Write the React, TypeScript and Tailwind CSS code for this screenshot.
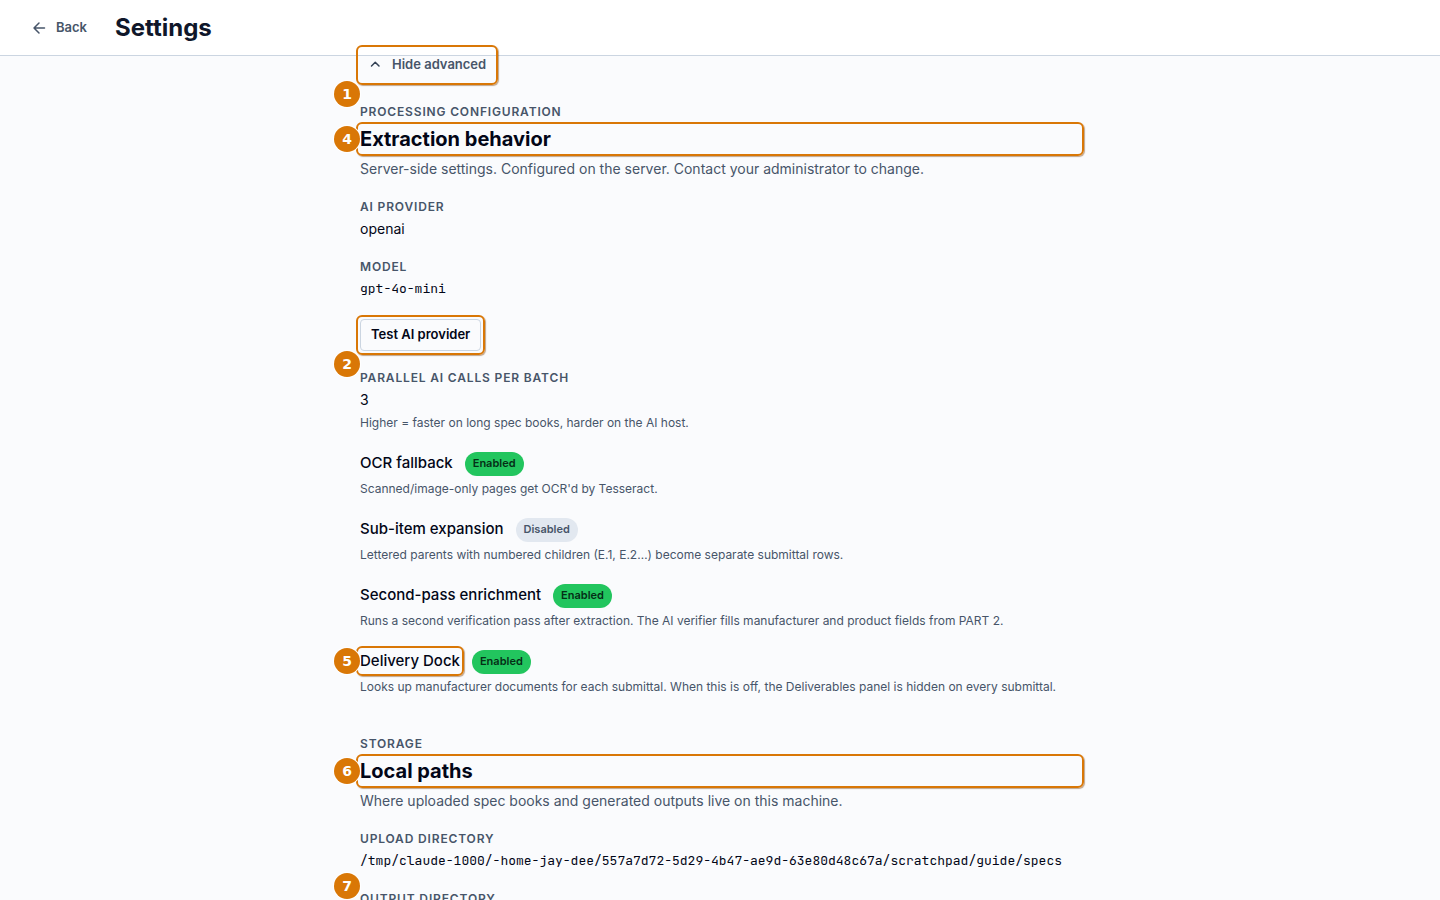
import type { ReactNode } from "react";

function Marker({ n, place }: { n: number; place: string }) {
  return (
    <span
      className={`absolute z-30 flex h-[26px] w-[26px] items-center justify-center rounded-full bg-[#d97706] font-['DejaVu_Sans',sans-serif] text-[14px] font-bold leading-none text-white shadow-[0_0_0_1px_#ffffff] ${place}`}
    >
      {n}
    </span>
  );
}

function Frame() {
  return (
    <span
      aria-hidden="true"
      className="pointer-events-none absolute -inset-1 z-20 rounded-md border-2 border-[#d97706] shadow-[1px_1px_1px_rgba(120,60,0,0.45)]"
    />
  );
}

function BackArrow() {
  return (
    <svg width="16" height="16" viewBox="0 0 16 16" fill="none" stroke="currentColor" strokeWidth="1.5" strokeLinecap="round" strokeLinejoin="round" aria-hidden="true">
      <path d="M12.5 8H2M7 3L2 8l5 5" />
    </svg>
  );
}

function Chevron() {
  return (
    <svg width="16" height="16" viewBox="0 0 16 16" fill="none" stroke="#334155" strokeWidth="1.5" strokeLinecap="round" strokeLinejoin="round" aria-hidden="true">
      <path d="M3.5 9L7.25 5.25L11 9" />
    </svg>
  );
}

function Eyebrow({ children }: { children: ReactNode }) {
  return (
    <p className="text-[12px] font-semibold uppercase leading-4 tracking-[0.07em] text-[#475569]">{children}</p>
  );
}

function SectionHead({ eyebrow, title, text, n }: { eyebrow: string; title: string; text: string; n: number }) {
  return (
    <header>
      <Eyebrow>{eyebrow}</Eyebrow>
      <div className="relative mt-[6px]">
        <Frame />
        <Marker n={n} place="-left-[26px] top-0" />
        <h2 className="text-[20px] font-bold leading-[26px] text-[#020617]">{title}</h2>
      </div>
      <p className="mt-[6px] text-[14px] leading-[22px] text-[#475569]">{text}</p>
    </header>
  );
}

function Field({ label, value, mono, help }: { label: string; value: string; mono?: boolean; help?: string }) {
  return (
    <dl>
      <dt className="text-[12px] font-semibold uppercase leading-4 tracking-[0.07em] text-[#475569]">{label}</dt>
      <dd
        className={
          mono
            ? "mt-[3px] whitespace-nowrap font-['JetBrains_Mono','DejaVu_Sans_Mono',monospace] text-[13px] leading-[22px] text-[#020617]"
            : "mt-[3px] text-[14px] leading-[22px] text-[#020617]"
        }
      >
        {value}
      </dd>
      {help && <dd className="mt-[2px] text-[12px] leading-5 text-[#475569]">{help}</dd>}
    </dl>
  );
}

function Flag({ name, on, help, n }: { name: string; on: boolean; help: string; n?: number }) {
  return (
    <div>
      <div className="flex items-start gap-3">
        <div className="relative">
          {n !== undefined && <Frame />}
          {n !== undefined && <Marker n={n} place="-left-[26px] -top-[2px]" />}
          <h3 className="text-[15px] font-medium leading-[22px] text-[#020617]">{name}</h3>
        </div>
        <span
          className={`h-6 rounded-full px-2 text-[11px] font-semibold leading-[22px] ${
            on ? "bg-[#22c55e] text-[#052e16]" : "bg-[#e2e8f0] text-[#475569]"
          }`}
        >
          {on ? "Enabled" : "Disabled"}
        </span>
      </div>
      <p className="mt-1 text-[12px] leading-[18px] text-[#475569]">{help}</p>
    </div>
  );
}

const flags = [
  { name: "OCR fallback", on: true, help: "Scanned/image-only pages get OCR'd by Tesseract." },
  {
    name: "Sub-item expansion",
    on: false,
    help: "Lettered parents with numbered children (E.1, E.2…) become separate submittal rows.",
  },
  {
    name: "Second-pass enrichment",
    on: true,
    help: "Runs a second verification pass after extraction. The AI verifier fills manufacturer and product fields from PART 2.",
  },
  {
    name: "Delivery Dock",
    on: true,
    help: "Looks up manufacturer documents for each submittal. When this is off, the Deliverables panel is hidden on every submittal.",
    n: 5,
  },
];

export default function App() {
  return (
    <div className="flex h-screen flex-col overflow-hidden bg-[#fafbfd] font-['Inter',sans-serif]">
      <header className="flex h-14 shrink-0 items-center gap-7 border-b border-[#cbd5e1] bg-white px-8">
        <button type="button" className="flex items-center gap-2 text-[13px] font-semibold text-[#475569]">
          <BackArrow />
          Back
        </button>
        <h1 className="text-[24px] font-bold leading-8 text-[#0f172a]">Settings</h1>
      </header>

      <main className="mx-auto w-full max-w-[720px] flex-1">
        <div className="relative -mt-[7px] w-fit">
          <Frame />
          <Marker n={1} place="-left-[26px] top-8" />
          <button type="button" className="flex h-8 items-center gap-2 px-2 text-[13px] font-semibold text-[#475569]">
            <Chevron />
            Hide advanced
          </button>
        </div>

        <section className="mt-[23px]">
          <SectionHead
            eyebrow="Processing configuration"
            title="Extraction behavior"
            text="Server-side settings. Configured on the server. Contact your administrator to change."
            n={4}
          />
          <div className="mt-[19px] flex flex-col gap-[19px]">
            <Field label="AI provider" value="openai" />
            <Field label="Model" value="gpt-4o-mini" mono />
            <div className="relative w-fit">
              <Frame />
              <Marker n={2} place="-left-[26px] top-8" />
              <button
                type="button"
                className="h-8 rounded border border-[#cbd5e1] px-[10px] text-[13px] font-semibold text-[#020617]"
              >
                Test AI provider
              </button>
            </div>
            <Field
              label="Parallel AI calls per batch"
              value="3"
              help="Higher = faster on long spec books, harder on the AI host."
            />
          </div>
          <div className="mt-[19px] flex flex-col gap-5">
            {flags.map((f) => (
              <Flag key={f.name} {...f} />
            ))}
          </div>
        </section>

        <section className="mt-10">
          <SectionHead
            eyebrow="Storage"
            title="Local paths"
            text="Where uploaded spec books and generated outputs live on this machine."
            n={6}
          />
          <div className="mt-[19px] flex flex-col gap-[19px]">
            <Field
              label="Upload directory"
              value="/tmp/claude-1000/-home-jay-dee/557a7d72-5d29-4b47-ae9d-63e80d48c67a/scratchpad/guide/specs"
              mono
            />
            <div className="relative">
              <Marker n={7} place="-left-[26px] -top-[18px]" />
              <Eyebrow>Output directory</Eyebrow>
            </div>
          </div>
        </section>
      </main>
    </div>
  );
}
